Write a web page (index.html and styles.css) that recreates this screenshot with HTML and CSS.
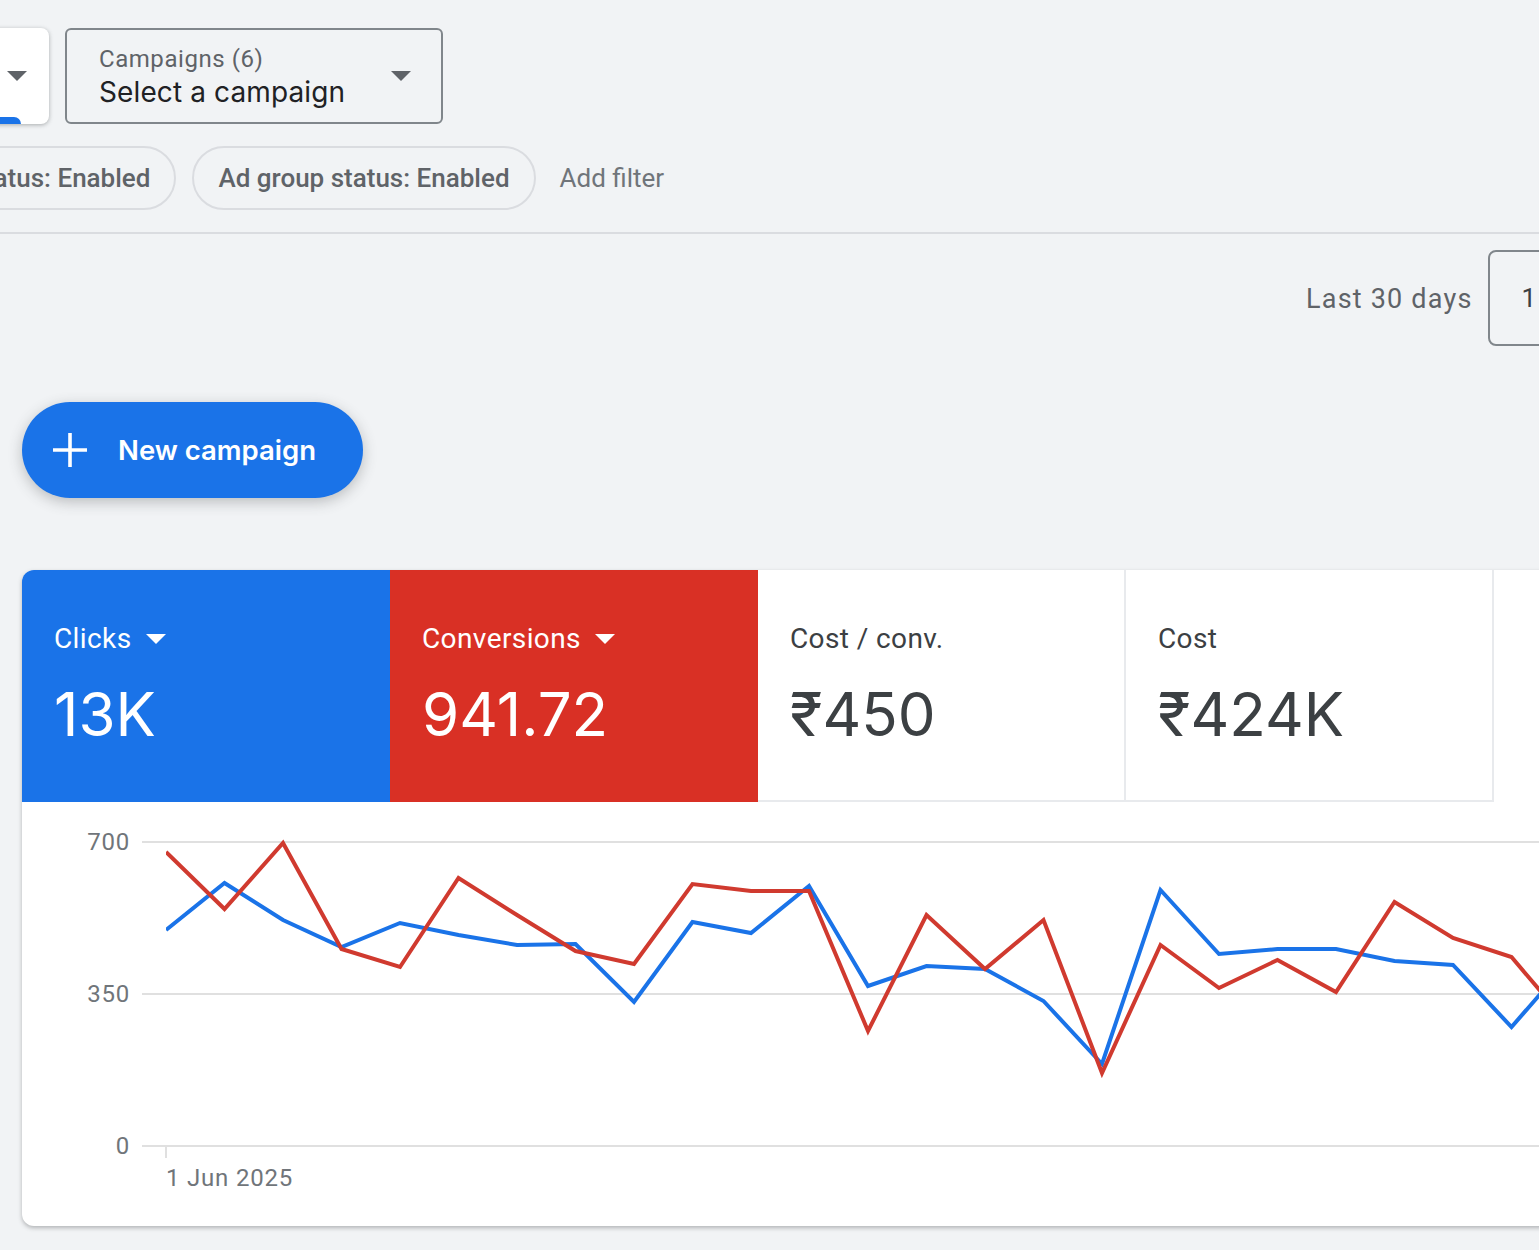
FILE: index.html
```html
<!DOCTYPE html>
<html lang="en">
<head>
    <meta charset="UTF-8">
    <title>Google Ads overview</title>
    <link rel="stylesheet" href="styles.css">
</head>
<body>
<header class="toolbar">
    <div class="pickers">
        <div class="picker picker-active">
            <div class="picker-text">
                <span class="picker-label">Workspace</span>
                <span class="picker-value">All campaigns</span>
            </div>
            <svg class="caret" width="20" height="10" viewBox="0 0 20 10"><path d="M0 0h20L10 10z"/></svg>
            <span class="picker-bar"></span>
        </div>
        <div class="picker">
            <div class="picker-text">
                <span class="picker-label">Campaigns (6)</span>
                <span class="picker-value">Select a campaign</span>
            </div>
            <svg class="caret" width="20" height="10" viewBox="0 0 20 10"><path d="M0 0h20L10 10z"/></svg>
        </div>
    </div>
    <div class="filters">
        <span class="chip">Campaign status: Enabled</span>
        <span class="chip">Ad group status: Enabled</span>
        <span class="add-filter">Add filter</span>
    </div>
</header>

<div class="date-row">
    <span class="date-label">Last 30 days</span>
    <div class="date-box">1 – 30 Jun 2025</div>
</div>

<div class="actions">
    <button class="new-campaign">
        <svg width="34" height="34" viewBox="0 0 34 34"><path d="M15.2 0h3.6v15.2H34v3.6H18.8V34h-3.6V18.8H0v-3.6h15.2z"/></svg>
        <span>New campaign</span>
    </button>
</div>

<section class="card">
    <div class="metrics">
        <div class="metric metric-blue">
            <div class="metric-name">Clicks
                <svg width="20" height="10" viewBox="0 0 20 10"><path d="M0 0h20L10 10z"/></svg>
            </div>
            <div class="metric-value">13K</div>
        </div>
        <div class="metric metric-red">
            <div class="metric-name">Conversions
                <svg width="20" height="10" viewBox="0 0 20 10"><path d="M0 0h20L10 10z"/></svg>
            </div>
            <div class="metric-value">941.72</div>
        </div>
        <div class="metric">
            <div class="metric-name">Cost / conv.</div>
            <div class="metric-value">₹450</div>
        </div>
        <div class="metric">
            <div class="metric-name">Cost</div>
            <div class="metric-value">₹424K</div>
        </div>
    </div>
    <svg class="chart" width="1517" height="424" viewBox="22 802 1517 424">
        <line class="grid" x1="142" y1="842" x2="1539" y2="842"/>
        <line class="grid" x1="142" y1="994" x2="1539" y2="994"/>
        <line class="grid" x1="142" y1="1146" x2="1539" y2="1146"/>
        <line class="grid" x1="166" y1="1146" x2="166" y2="1158"/>
        <text class="axis" x="130" y="850" text-anchor="end">700</text>
        <text class="axis" x="130" y="1002" text-anchor="end">350</text>
        <text class="axis" x="130" y="1154" text-anchor="end">0</text>
        <text class="axis" x="166" y="1186">1 Jun 2025</text>
        <clipPath id="plot"><rect x="166" y="802" width="1373" height="424"/></clipPath>
        <g clip-path="url(#plot)">
            <polyline class="line-blue" points="166,930 224.5,883 283,920 341.5,947 400,923 458.5,935 517,945 575.5,944 634,1002 692.5,922 751,933 809,886 868,986 926.5,966 985,969 1043.5,1001 1102,1064 1160.5,890 1219,954 1277.5,949 1336,949 1394.5,961 1453,965 1511.5,1027 1570,960"/>
            <polyline class="line-red" points="166,852 224.5,909 283,843 341.5,949 400,967 458.5,878 517,915 575.5,951 634,964 692.5,884 751,891 809,891 868,1031 926.5,915 985,969 1043.5,920 1102,1073 1160.5,945 1219,988 1277.5,960 1336,992 1394.5,902 1453,938 1511.5,957 1570,1026"/>
        </g>
    </svg>
</section>
</body>
</html>
```

FILE: styles.css
```css
body{
    margin:0;
    height:1250px;
    overflow:hidden;
    background:#f1f3f5;
    font-family:Roboto, "Liberation Sans", sans-serif;
    color:#3c4043;
}

.toolbar{
    height:234px;
    padding-top:28px;
    box-sizing:border-box;
    border-bottom:2px solid #dadce0;
}

.pickers{
    display:flex;
    gap:16px;
    margin-left:-329px;
}

.picker{
    position:relative;
    flex:0 0 378px;
    height:96px;
    box-sizing:border-box;
    display:flex;
    align-items:center;
    justify-content:space-between;
    padding:0 30px 0 32px;
    border:2px solid #80868b;
    border-radius:6px;
}

.picker-active{
    background:#fff;
    border:0;
    border-radius:8px;
    box-shadow:0 1px 4px rgba(60,64,67,.4);
    padding:0 22px 0 34px;
    overflow:hidden;
}

.picker-bar{
    position:absolute;
    left:0;
    bottom:0;
    width:350px;
    height:7px;
    background:#1a73e8;
    border-top-right-radius:7px;
}

.picker-text{
    display:flex;
    flex-direction:column;
    padding-top:2px;
}

.picker-label{
    font-size:24px;
    line-height:30px;
    letter-spacing:.55px;
    color:#5f6368;
}

.picker-value{
    font-family:Inter, Roboto, sans-serif;
    font-size:28px;
    line-height:36px;
    letter-spacing:.12px;
    color:#202124;
}

.caret{
    fill:#5f6368;
}

.filters{
    display:flex;
    align-items:center;
    gap:16px;
    margin:22px 0 0 -179px;
}

.chip{
    flex:none;
    height:64px;
    box-sizing:border-box;
    padding:0 24px;
    border:2px solid #dadce0;
    border-radius:32px;
    font-size:26px;
    font-weight:500;
    line-height:60px;
    color:#5f6368;
}

.add-filter{
    margin-left:8px;
    font-size:26px;
    color:#70757a;
}

.date-row{
    display:flex;
    align-items:center;
    gap:15px;
    padding:16px 0 0 1306px;
}

.date-label{
    flex:none;
    padding-top:2px;
    font-size:27px;
    letter-spacing:1.2px;
    color:#5f6368;
}

.date-box{
    flex:none;
    width:400px;
    height:96px;
    box-sizing:border-box;
    padding-left:32px;
    border:2px solid #80868b;
    border-radius:8px;
    font-size:26px;
    line-height:92px;
    color:#3c4043;
}

.actions{
    padding:56px 0 0 22px;
}

.new-campaign{
    display:flex;
    align-items:center;
    gap:31px;
    width:341px;
    height:96px;
    padding:0 0 0 31px;
    border:0;
    border-radius:48px;
    background:#1a73e8;
    box-shadow:0 4px 14px rgba(60,64,67,.3);
    font-family:Inter, Roboto, sans-serif;
    font-size:27.5px;
    font-weight:600;
    color:#fff;
}

.new-campaign svg{
    fill:#fff;
}

.card{
    width:1537px;
    height:656px;
    margin:72px 0 0 22px;
    background:#fff;
    border-radius:12px;
    box-shadow:0 2px 4px rgba(60,64,67,.35);
    overflow:hidden;
}

.metrics{
    display:flex;
    height:232px;
}

.metric{
    flex:0 0 368px;
    box-sizing:border-box;
    padding:51px 0 0 32px;
    border-right:2px solid #e8eaed;
    border-bottom:2px solid #e8eaed;
}

.metric-blue{
    background:#1a73e8;
    border:0;
    color:#fff;
}

.metric-red{
    background:#d93025;
    border:0;
    color:#fff;
}

.metric-name{
    display:flex;
    align-items:center;
    gap:14px;
    font-size:28px;
    letter-spacing:.4px;
    line-height:36px;
}

.metric-name svg{
    fill:currentColor;
}

.metric-value{
    margin-top:22px;
    font-family:Inter, Roboto, sans-serif;
    font-size:60px;
    line-height:70px;
}

.chart{
    display:block;
}

.grid{
    stroke:#e0e0e0;
    stroke-width:2;
}

.axis{
    font-size:24px;
    letter-spacing:.8px;
    fill:#70757a;
}

.line-blue,
.line-red{
    fill:none;
    stroke-width:4;
}

.line-blue{
    stroke:#1a73e8;
}

.line-red{
    stroke:#d03a2f;
}
```
